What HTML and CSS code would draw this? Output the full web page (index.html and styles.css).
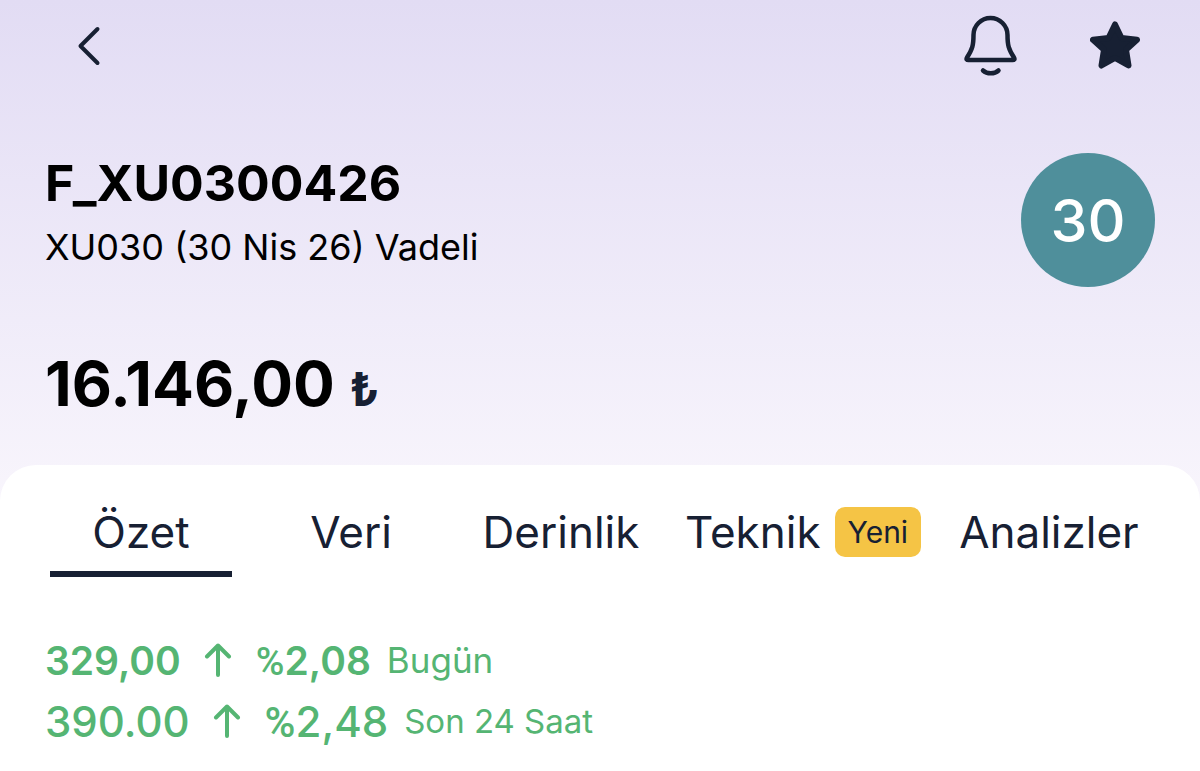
FILE: index.html
```html
<!DOCTYPE html>
<html lang="tr">
<head>
    <meta charset="UTF-8">
    <meta name="viewport" content="width=device-width, initial-scale=1.0">
    <title>F_XU0300426</title>
    <link rel="stylesheet" href="styles.css">
</head>
<body>

<header class="hero">
    <div class="topbar">
        <button type="button" class="icon-btn" aria-label="Geri">
            <svg width="24" height="40" viewBox="0 0 24 40" fill="none" stroke="currentColor" stroke-width="4" stroke-linecap="round" stroke-linejoin="round">
                <path d="M20.500 3 3.500 20l17 17"/>
            </svg>
        </button>
        <div class="topbar-actions">
            <button type="button" class="icon-btn" aria-label="Alarm kur">
                <svg width="54" height="62" viewBox="0 0 54 62" fill="none" stroke="currentColor" stroke-width="4.500" stroke-linecap="round" stroke-linejoin="round">
                    <path d="M26.500 3A17 17 0 0 0 9.500 20C9.500 30 8.500 34 3 42.500C2 44.300 2.700 45 4.500 45H48.500C50.300 45 51 44.300 50 42.500C44.500 34 43.500 30 43.500 20A17 17 0 0 0 26.500 3Z"/>
                    <path d="M19 55.500C23 59.200 30.500 59.200 34.500 55.500"/>
                </svg>
            </button>
            <button type="button" class="icon-btn" aria-label="Favorilerden çıkar">
                <svg width="50" height="50" viewBox="0 0 50 50" fill="currentColor" stroke="currentColor" stroke-width="6" stroke-linejoin="round">
                    <path d="M25 3.500 31.500 17 47 18.800 36 28.700 38.500 44.500 25 37 11.500 44.500 14 28.700 3 18.800 18.500 17Z"/>
                </svg>
            </button>
        </div>
    </div>

    <div class="symbol">
        <div>
            <h1 class="symbol-code">F_XU0300426</h1>
            <p class="symbol-name">XU030 (30 Nis 26) Vadeli</p>
        </div>
        <div class="symbol-logo">30</div>
    </div>

    <p class="price">16.146,00 <span class="currency">₺</span></p>
</header>

<main class="panel">
    <nav class="tabs">
        <a href="#ozet" class="tab active">Özet</a>
        <a href="#veri" class="tab">Veri</a>
        <a href="#derinlik" class="tab">Derinlik</a>
        <a href="#teknik" class="tab">Teknik <span class="badge">Yeni</span></a>
        <a href="#analizler" class="tab">Analizler</a>
    </nav>

    <section class="changes" id="ozet">
        <p class="change today">
            <span>329,00</span>
            <svg class="arrow" width="28" height="36" viewBox="0 0 28 36" fill="none" stroke="currentColor" stroke-width="4" stroke-linecap="round" stroke-linejoin="round">
                <path d="M14 32V2.500M3 13.500 14 2.500l11 11"/>
            </svg>
            <span><span class="percent">%</span>2,08</span>
            <span class="period">Bugün</span>
        </p>
        <p class="change last-day">
            <span>390.00</span>
            <svg class="arrow" width="28" height="36" viewBox="0 0 28 36" fill="none" stroke="currentColor" stroke-width="4" stroke-linecap="round" stroke-linejoin="round">
                <path d="M14 32V2.500M3 13.500 14 2.500l11 11"/>
            </svg>
            <span><span class="percent">%</span>2,48</span>
            <span class="period">Son 24 Saat</span>
        </p>
    </section>
</main>

</body>
</html>
```

FILE: styles.css
```css
* {
    box-sizing: border-box;
}
body {
    font-family: Inter, sans-serif;
    margin: 0;
    background: white;
    color: #172033;
}
h1, p {
    margin: 0;
}
.hero {
    padding: 15px 45px 74px;
    background: linear-gradient(#e2dcf4, #f8f5fc);
}
.topbar {
    display: flex;
    justify-content: space-between;
    align-items: center;
    padding: 0 15px 0 32px;
}
.topbar-actions {
    display: flex;
    align-items: center;
    gap: 72px;
}
.icon-btn {
    display: flex;
    padding: 0;
    border: none;
    background: none;
    color: #172033;
    cursor: pointer;
}
.symbol {
    display: flex;
    justify-content: space-between;
    align-items: flex-start;
    margin-top: 76px;
}
.symbol-code {
    font-size: 50px;
    line-height: 60px;
    font-weight: 700;
    color: black;
}
.symbol-name {
    font-size: 36px;
    line-height: 44px;
    margin-top: 12px;
    color: black;
}
.symbol-logo {
    display: flex;
    align-items: center;
    justify-content: center;
    width: 134px;
    height: 134px;
    border-radius: 50%;
    background: #4f8f9b;
    color: white;
    font-size: 59px;
    font-weight: 500;
}
.price {
    margin-top: 59px;
    font-size: 62px;
    line-height: 76px;
    font-weight: 700;
    color: black;
}
.currency {
    font-size: 46px;
    color: #172033;
}
.panel {
    margin-top: -36px;
    padding: 36px 45px 16px;
    border-radius: 36px 36px 0 0;
    background: white;
}
.tabs {
    display: flex;
    gap: 28px;
    padding: 0 5px;
}
.tab {
    display: flex;
    align-items: center;
    justify-content: center;
    gap: 14px;
    min-width: 182px;
    padding: 0 5px 8px;
    border-bottom: 6px solid transparent;
    font-size: 44px;
    line-height: 62px;
    color: #172033;
    text-decoration: none;
}
.tab.active {
    border-color: #172033;
}
.badge {
    padding: 0 13px;
    border-radius: 10px;
    background: #f5c445;
    font-size: 30px;
    line-height: 50px;
}
.changes {
    margin-top: 53px;
    color: #55b573;
}
.change {
    display: flex;
    align-items: center;
    line-height: 61px;
}
.arrow {
    margin: 0 24px 0 23px;
}
.percent {
    font-family: Roboto, sans-serif;
    font-weight: 500;
    line-height: 1;
}
.period {
    margin-left: 16px;
    font-weight: 400;
}
.today {
    font-size: 39px;
    font-weight: 600;
}
.today .period {
    font-size: 35px;
}
.last-day {
    font-size: 42px;
    font-weight: 500;
}
.last-day .period {
    font-size: 33px;
}
```
